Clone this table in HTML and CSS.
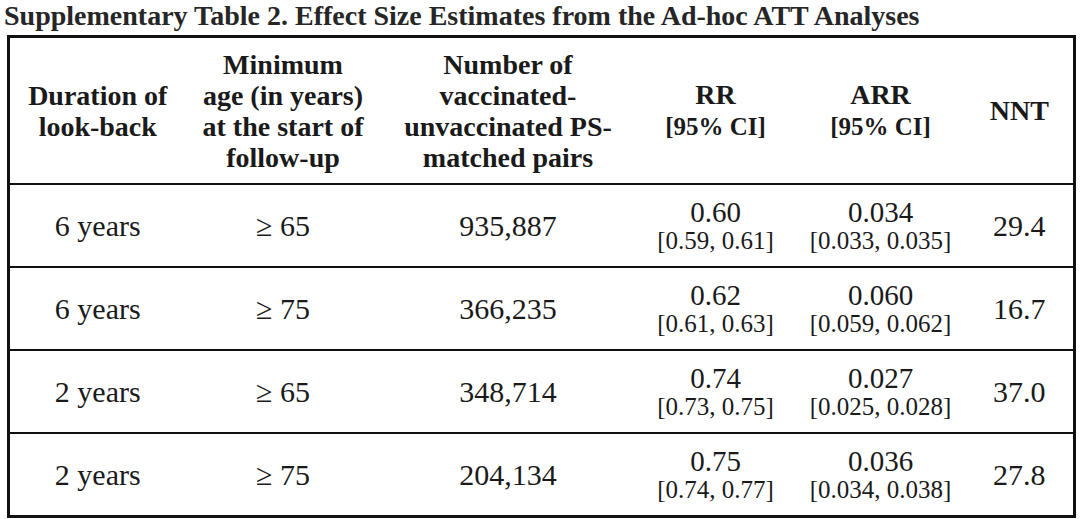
FILE: index.html
```html
<!DOCTYPE html>
<html>
<head>
<meta charset="utf-8">
<link rel="stylesheet" href="styles.css">
</head>
<body>
<div class="page">
  <h1 class="title">Supplementary Table 2. Effect Size Estimates from the Ad-hoc ATT Analyses</h1>
  <table class="tbl">
    <colgroup>
      <col class="c1"><col class="c2"><col class="c3"><col class="c4"><col class="c5"><col class="c6">
    </colgroup>
    <thead>
      <tr>
        <th>Duration of<br>look-back</th>
        <th>Minimum<br>age (in years)<br>at the start of<br>follow-up</th>
        <th>Number of<br>vaccinated-<br>unvaccinated PS-<br>matched pairs</th>
        <th>RR<br><span class="ci-h">[95% CI]</span></th>
        <th>ARR<br><span class="ci-h">[95% CI]</span></th>
        <th>NNT</th>
      </tr>
    </thead>
    <tbody>
      <tr>
        <td>6 years</td><td>≥ 65</td><td>935,887</td>
        <td><div class="v">0.60</div><div class="ci">[0.59, 0.61]</div></td>
        <td><div class="v">0.034</div><div class="ci">[0.033, 0.035]</div></td>
        <td>29.4</td>
      </tr>
      <tr>
        <td>6 years</td><td>≥ 75</td><td>366,235</td>
        <td><div class="v">0.62</div><div class="ci">[0.61, 0.63]</div></td>
        <td><div class="v">0.060</div><div class="ci">[0.059, 0.062]</div></td>
        <td>16.7</td>
      </tr>
      <tr>
        <td>2 years</td><td>≥ 65</td><td>348,714</td>
        <td><div class="v">0.74</div><div class="ci">[0.73, 0.75]</div></td>
        <td><div class="v">0.027</div><div class="ci">[0.025, 0.028]</div></td>
        <td>37.0</td>
      </tr>
      <tr>
        <td>2 years</td><td>≥ 75</td><td>204,134</td>
        <td><div class="v">0.75</div><div class="ci">[0.74, 0.77]</div></td>
        <td><div class="v">0.036</div><div class="ci">[0.034, 0.038]</div></td>
        <td>27.8</td>
      </tr>
    </tbody>
  </table>
</div>
</body>
</html>
```
FILE: styles.css
```css
html, body {
  margin: 0;
  padding: 0;
  background: #ffffff;
}
body {
  font-family: "Liberation Serif", "Times New Roman", serif;
  color: #1a1a1a;
}
.page {
  padding: 0 0 0 7px;
  width: 1066px;
}
.title {
  margin: 0 0 0 -3px;
  font-size: 28px;
  font-weight: bold;
  line-height: 32px;
  height: 35px;
  color: #262626;
  white-space: nowrap;
}
.tbl {
  border-collapse: collapse;
  width: 1066px;
  border: 3px solid #111;
  table-layout: fixed;
}
.c1 { width: 177px; }
.c2 { width: 195px; }
.c3 { width: 255px; }
.c4 { width: 160px; }
.c5 { width: 170px; }
.c6 { width: 109px; }
.tbl th {
  font-weight: bold;
  font-size: 28px;
  line-height: 31px;
  height: 145px;
  padding: 0;
  text-align: center;
  vertical-align: middle;
  border-bottom: 2px solid #111;
  color: #1a1a1a;
}
.ci-h {
  font-size: 25px;
}
.tbl td {
  font-size: 30px;
  height: 81px;
  padding: 0;
  text-align: center;
  vertical-align: middle;
  border-top: 2px solid #111;
  line-height: 30px;
}
.v {
  font-size: 29px;
  line-height: 30px;
}
.ci {
  font-size: 25px;
  line-height: 27px;
}
```
